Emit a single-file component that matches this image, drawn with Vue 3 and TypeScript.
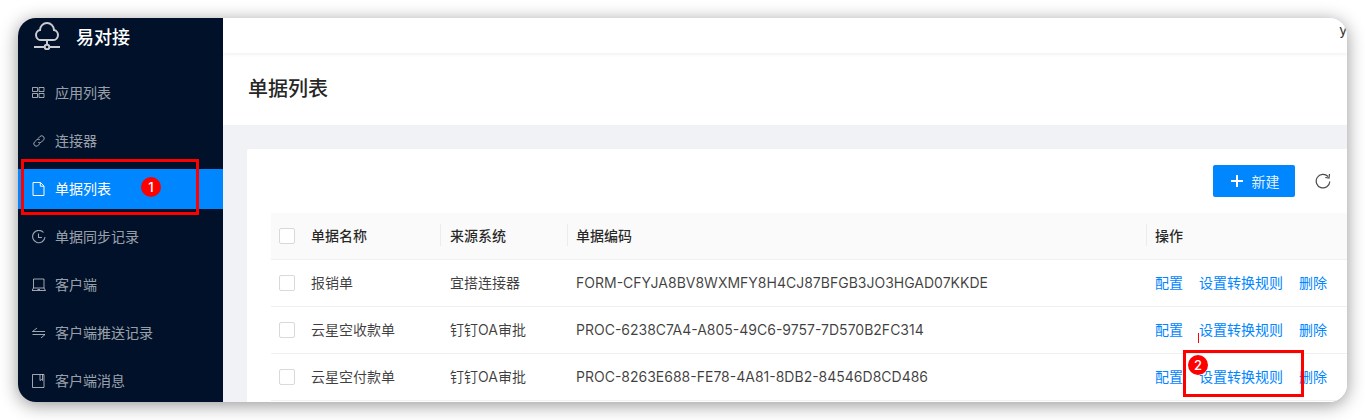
<script setup lang="ts">
const menus = [
  { name: '应用列表', icon: 'grid' },
  { name: '连接器', icon: 'link' },
  { name: '单据列表', icon: 'file', active: true },
  { name: '单据同步记录', icon: 'clock' },
  { name: '客户端', icon: 'laptop' },
  { name: '客户端推送记录', icon: 'swap' },
  { name: '客户端消息', icon: 'book' },
]

const rows = [
  { name: '报销单', source: '宜搭连接器', code: 'FORM-CFYJA8BV8WXMFY8H4CJ87BFGB3JO3HGAD07KKDE' },
  { name: '云星空收款单', source: '钉钉OA审批', code: 'PROC-6238C7A4-A805-49C6-9757-7D570B2FC314' },
  { name: '云星空付款单', source: '钉钉OA审批', code: 'PROC-8263E688-FE78-4A81-8DB2-84546D8CD486' },
]
</script>

<template>
  <div class="page">
    <div class="window">
      <aside class="sider">
        <div class="logo">
          <svg class="logo-icon" viewBox="0 0 30 30" fill="none" stroke="#c9ccd1" stroke-width="2">
            <path d="M8 20a5 5 0 0 1-1-9.900 7 7 0 0 1 14 0 5 5 0 0 1-1 9.900z" />
            <path d="M14 20v5" />
            <path d="M1 27h10.500M16.500 27H27" />
            <circle cx="14" cy="27" r="2.300" />
          </svg>
          <span class="logo-text">易对接</span>
        </div>
        <ul class="menu">
          <li v-for="m in menus" :key="m.name" class="menu-item" :class="{ active: m.active }">
            <svg class="menu-icon" viewBox="0 0 14 14" fill="none" stroke="currentColor" stroke-width="1">
              <template v-if="m.icon === 'grid'">
                <path d="M.5 1.500h5v4h-5zM7 1.500h5v4H7zM.5 7.500h5v4h-5zM7 7.500h5v4H7z" />
              </template>
              <template v-else-if="m.icon === 'link'">
                <path d="M6 4.500 8.200 2.300a2.500 2.500 0 0 1 3.500 3.500L9.500 8a2.500 2.500 0 0 1-3.300.3" />
                <path d="M8 9.500 5.800 11.700a2.500 2.500 0 0 1-3.500-3.500L4.500 6a2.500 2.500 0 0 1 3.300-.3" />
              </template>
              <template v-else-if="m.icon === 'file'">
                <path d="M1 .5h7.500L12 4v9.500H1z" />
                <path d="M8.300 .5v3.700H12" />
              </template>
              <template v-else-if="m.icon === 'clock'">
                <path d="M11.500 2.500A6.200 6.200 0 1 0 13 7" stroke-width="1.100" />
                <path d="M6.500 3.500V7.500h3.500" stroke-width="1.100" />
              </template>
              <template v-else-if="m.icon === 'laptop'">
                <path d="M1.500 1h10.500v9H1.500z" />
                <path d="M0 12.500h13.500M1.500 10 0 12.500M12 10l1.500 2.500M5.500 11.500h2.500" />
              </template>
              <template v-else-if="m.icon === 'swap'">
                <path d="M13 5.500H.5L5 2" />
                <path d="M.5 8.500H13L9 12" />
              </template>
              <template v-else>
                <path d="M.5 .5h11.500v13H.5z" />
                <path d="M8 .5v6l1.500-1 1 1V.5" />
              </template>
            </svg>
            <span>{{ m.name }}</span>
          </li>
        </ul>
      </aside>

      <main class="main">
        <header class="topbar"><span class="user">y</span></header>
        <div class="page-title">单据列表</div>
        <section class="content">
          <div class="card">
            <div class="toolbar">
              <button class="btn-new">
                <svg class="plus" viewBox="0 0 12 12" fill="none" stroke="#fff" stroke-width="2">
                  <path d="M6 0v12M0 6h12" />
                </svg>
                新建
              </button>
              <svg class="reload" viewBox="0 0 16 16" fill="none" stroke="#4a4a4a" stroke-width="1.200">
                <path d="M13 3.500A6.800 6.800 0 1 0 14.800 8.500" />
                <path d="M14.500 1 14 5 10.300 4.500" />
              </svg>
            </div>
            <div class="table">
              <div class="tr thead">
                <div class="cell c-check"><i class="checkbox"></i></div>
                <div class="cell c-name">单据名称</div>
                <div class="cell c-source sep">来源系统</div>
                <div class="cell c-code sep">单据编码</div>
                <div class="cell c-op sep">操作</div>
              </div>
              <div v-for="r in rows" :key="r.code" class="tr">
                <div class="cell c-check"><i class="checkbox"></i></div>
                <div class="cell c-name">{{ r.name }}</div>
                <div class="cell c-source">{{ r.source }}</div>
                <div class="cell c-code">{{ r.code }}</div>
                <div class="cell c-op links">
                  <a>配置</a><a>设置转换规则</a><a>删除</a>
                </div>
              </div>
            </div>
          </div>
        </section>
      </main>

      <!-- 标注层 -->
      <div class="mark mark-1"></div>
      <div class="badge badge-1">1</div>
      <div class="mark mark-2"></div>
      <div class="badge badge-2">2</div>
      <div class="tick"></div>
    </div>
  </div>
</template>

<style>
html, body {
  margin: 0;
  background: #fff;
}
</style>

<style scoped>
.page {
  width: 1365px;
  height: 420px;
  padding: 18px;
  box-sizing: border-box;
  background: #fff;
  overflow: hidden;
  font-family: "Inter", "Noto Sans CJK SC", sans-serif;
}

.window {
  position: relative;
  display: flex;
  width: 1329px;
  height: 384px;
  border-radius: 18px;
  overflow: hidden;
  background: #f0f2f5;
}

.page::before {
  content: "";
  position: absolute;
  left: 18px;
  top: 18px;
  width: 1329px;
  height: 384px;
  border-radius: 18px;
  box-shadow: 0 3px 18px rgba(0, 0, 0, 0.42);
}

.sider {
  flex: none;
  width: 205px;
  background: #001129;
  color: rgba(255, 255, 255, 0.62);
}

.logo {
  display: flex;
  align-items: center;
  height: 36px;
  padding-left: 15px;
  margin-bottom: 19px;
}

.logo-icon {
  flex: none;
  width: 30px;
  height: 30px;
  margin-top: -2px;
}

.logo-text {
  margin-left: 13px;
  margin-top: 4px;
  font-size: 18px;
  line-height: 36px;
  font-weight: 500;
  color: #fff;
}

.menu {
  margin: 0;
  padding: 0;
  list-style: none;
}

.menu-item {
  display: flex;
  align-items: center;
  box-sizing: border-box;
  height: 40px;
  margin-bottom: 8px;
  padding-left: 14px;
  padding-bottom: 2px;
  font-size: 14px;
}

.menu-item.active {
  background: #0086ff;
  color: #fff;
}

.menu-icon {
  flex: none;
  width: 14px;
  height: 14px;
  margin-right: 9px;
  margin-top: 2px;
}

.main {
  display: flex;
  flex-direction: column;
  flex: 1;
  min-width: 0;
}

.topbar {
  flex: none;
  display: flex;
  justify-content: flex-end;
  height: 35px;
  background: #fff;
  box-shadow: 0 1px 4px rgba(0, 21, 41, 0.08);
  position: relative;
}

.user {
  font-size: 14px;
  line-height: 24px;
  color: #333;
}

.page-title {
  flex: none;
  box-sizing: border-box;
  height: 72px;
  line-height: 73px;
  padding-left: 25px;
  background: #fff;
  font-size: 20px;
  font-weight: 500;
  color: #262626;
}

.content {
  flex: 1;
  padding: 24px 0 0 24px;
  min-height: 0;
}

.card {
  height: 100%;
  padding: 0 0 0 24px;
  background: #fff;
  border-radius: 2px 0 0 0;
}

.toolbar {
  display: flex;
  justify-content: flex-end;
  align-items: center;
  height: 64px;
  padding-right: 16px;
}

.btn-new {
  display: flex;
  align-items: center;
  justify-content: center;
  width: 82px;
  height: 32px;
  margin-right: 20px;
  border: none;
  border-radius: 2px;
  background: #0086ff;
  color: rgba(255, 255, 255, 0.9);
  font: inherit;
  font-size: 14px;
  padding: 0 0 1px 2px;
}

.plus {
  width: 12px;
  height: 12px;
  margin-right: 9px;
}

.reload {
  width: 16px;
  height: 16px;
}

.tr {
  display: flex;
  align-items: center;
  height: 47px;
  box-sizing: border-box;
  padding-bottom: 2px;
  border-bottom: 1px solid #f0f0f0;
  font-size: 14px;
  color: rgba(0, 0, 0, 0.75);
}

.thead {
  background: #fafafa;
  font-weight: 500;
  color: rgba(0, 0, 0, 0.85);
}

.cell {
  flex: none;
  position: relative;
  box-sizing: border-box;
  white-space: nowrap;
}

.sep::before {
  content: "";
  position: absolute;
  left: -1px;
  top: 50%;
  width: 1px;
  height: 22px;
  margin-top: -11px;
  background: #ececec;
}

.c-check {
  width: 40px;
  padding-left: 8px;
  display: flex;
  margin-top: 2px;
}

.c-name {
  width: 130px;
}

.c-source {
  width: 127px;
  padding-left: 9px;
}

.c-code {
  width: 579px;
  padding-left: 8px;
}

.c-op {
  padding-left: 8px;
  flex: 1;
}

.checkbox {
  display: block;
  width: 16px;
  height: 16px;
  box-sizing: border-box;
  border: 1px solid #d9d9d9;
  border-radius: 2px;
  background: #fff;
}

.links {
  display: flex;
  gap: 16px;
  color: #0086ff;
}

.mark {
  position: absolute;
  box-sizing: border-box;
  border: 3px solid #f00;
  background: transparent;
}

.mark-1 {
  left: 3px;
  top: 141px;
  width: 178px;
  height: 56px;
}

.mark-2 {
  left: 1165px;
  top: 332px;
  width: 121px;
  height: 47px;
}

.badge {
  position: absolute;
  width: 20px;
  height: 20px;
  border-radius: 50%;
  background: #f00;
  color: #fff;
  font-size: 13px;
  font-weight: 500;
  line-height: 20px;
  text-align: center;
}

.badge-1 {
  left: 123px;
  top: 159px;
}

.badge-2 {
  left: 1170px;
  top: 337px;
}

.tick {
  position: absolute;
  left: 1180px;
  top: 315px;
  width: 1px;
  height: 10px;
  background: #f00;
}
</style>
